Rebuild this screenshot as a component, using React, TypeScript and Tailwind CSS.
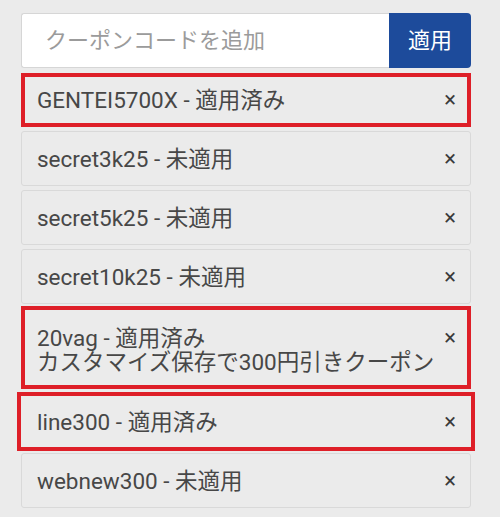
import React, { useState } from 'react';

type Coupon = {
  code: string;
  applied: boolean;
  note?: string;
  cls: string;
};

const coupons: Coupon[] = [
  { code: 'GENTEI5700X', applied: true, cls: 'mt-[5px] h-[54px] pl-[12px] pr-[11px]' },
  { code: 'secret3k25', applied: false, cls: 'mt-[4px] h-[55px] pl-[15px] pr-[14px]' },
  { code: 'secret5k25', applied: false, cls: 'mt-[4px] h-[55px] pl-[15px] pr-[14px]' },
  { code: 'secret10k25', applied: false, cls: 'mt-[4px] h-[55px] pl-[15px] pr-[14px]' },
  { code: '20vag', applied: true, note: 'カスタマイズ保存で300円引きクーポン', cls: 'mt-[2px] h-[83px] pl-[12px] pr-[11px] pt-[5px]' },
  { code: 'line300', applied: true, cls: 'mt-[3px] h-[59px] -mx-[4px] pl-[16px] pr-[15px]' },
  { code: 'webnew300', applied: false, cls: 'mt-[2px] h-[55px] pl-[15px] pr-[14px]' },
];

const App: React.FC = () => {
  const [code, setCode] = useState('');

  return (
    <div className="min-h-[517px] w-[500px] bg-[#ebebeb] pl-[21px] pr-[29px] pt-[13px] font-['Roboto','Noto_Sans_CJK_JP',sans-serif] text-[#474747]">
      <div className="flex h-[55px]">
        <input
          value={code}
          onChange={(e) => setCode(e.target.value)}
          placeholder="クーポンコードを追加"
          className="h-full min-w-0 flex-1 rounded-l-[3px] border border-r-0 border-[#d6d6d6] bg-white pl-[23px] text-[22px] text-[#333] outline-none placeholder:text-[#9b9b9b]"
        />
        <button className="h-full w-[82px] rounded-r-[4px] bg-[#1d4b9b] text-[22px] text-white">適用</button>
      </div>

      {coupons.map((c) => (
        <div
          key={c.code}
          className={`flex items-center justify-between bg-[#ebebeb] ${c.cls} ${
            c.applied ? 'border-4 border-[#de1f28]' : 'rounded-[3px] border border-[#d9d9d9]'
          }`}
        >
          <div className="text-[22.5px] leading-[24px]">
            <div>
              {c.code} - {c.applied ? '適用済み' : '未適用'}
            </div>
            {c.note && <div>{c.note}</div>}
          </div>
          <button className={`self-center text-[22px] leading-none text-[#3a3a3a] ${c.note ? 'mb-[24px]' : ''}`}>×</button>
        </div>
      ))}
    </div>
  );
};

export default App;
